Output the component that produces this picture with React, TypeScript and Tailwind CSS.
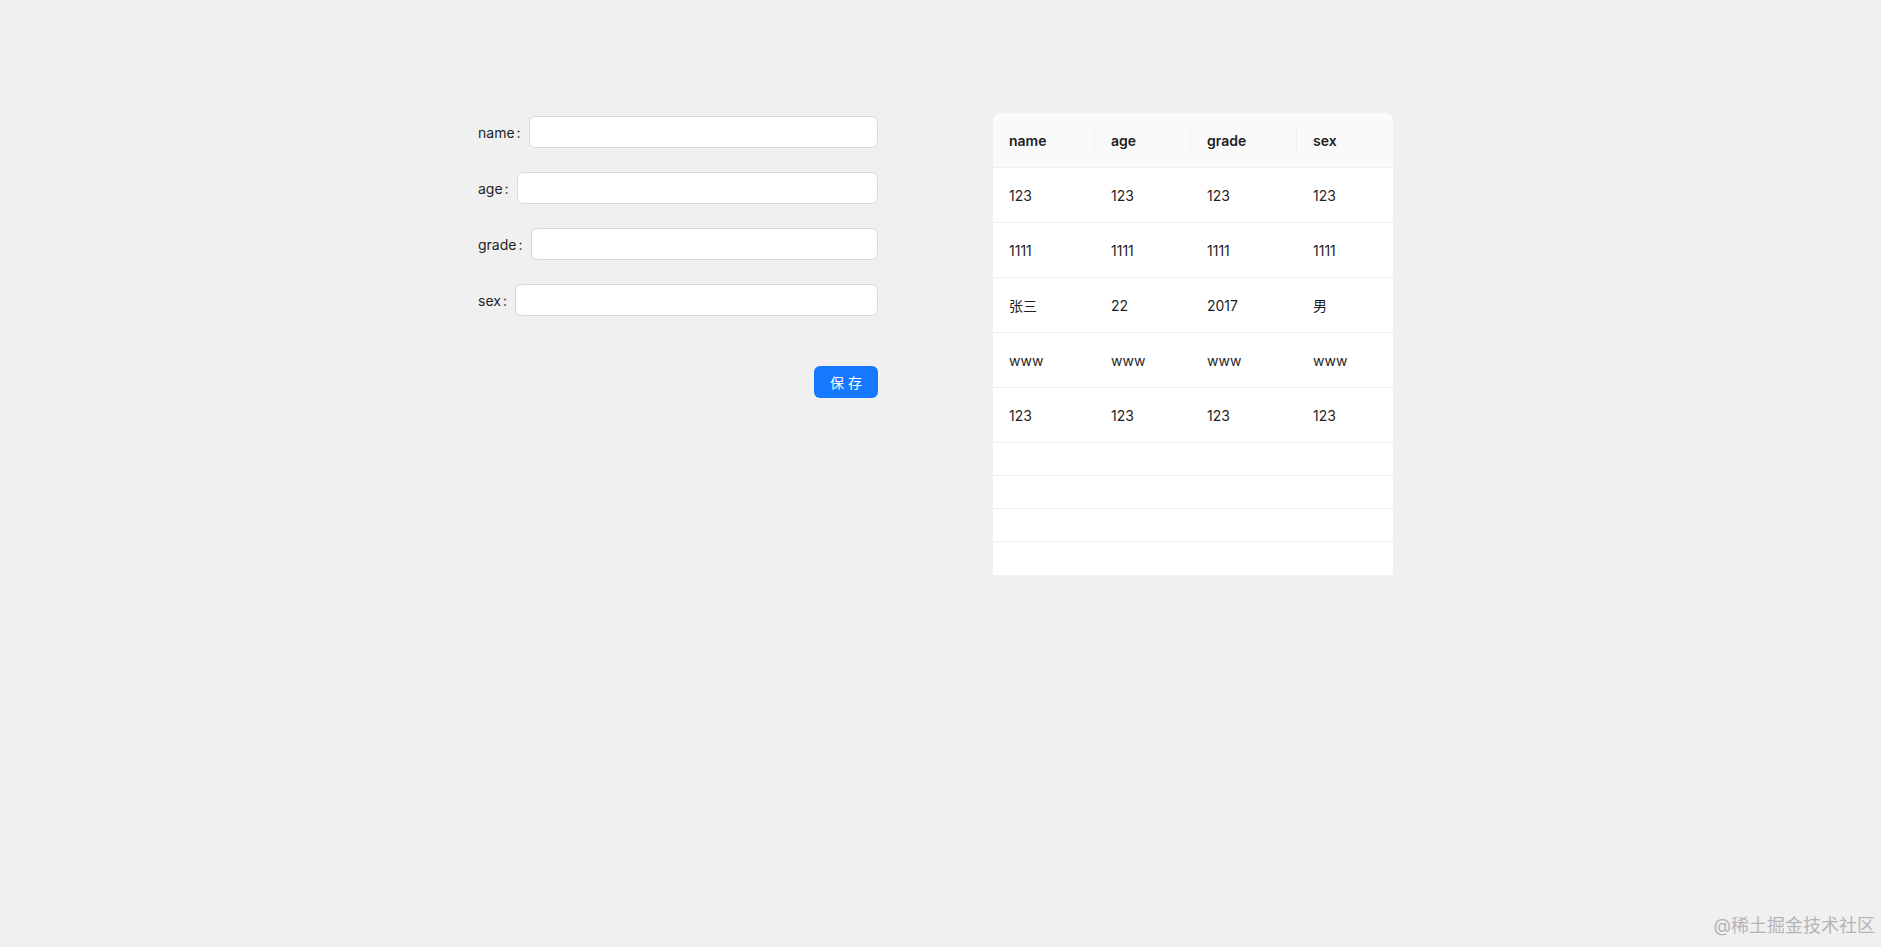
import React from "react";

const fields = ["name", "age", "grade", "sex"];

const rows = [
  ["123", "123", "123", "123"],
  ["1111", "1111", "1111", "1111"],
  ["张三", "22", "2017", "男"],
  ["www", "www", "www", "www"],
  ["123", "123", "123", "123"],
];

const colWidths = ["w-[102px]", "w-[96px]", "w-[106px]", "w-[96px]"];

// form on the left, simple list table on the right
function StudentForm() {
  return (
    <div className="mt-[3px] flex w-[400px] flex-col">
      {fields.map((f) => (
        <div key={f} className="mb-6 flex h-8 items-center">
          <label className="flex items-center whitespace-nowrap text-[14px] text-[#1f1f1f]">
            {f}
            <span className="ml-[2px] mr-2">:</span>
          </label>
          <input className="h-8 flex-1 rounded-md border border-[#d9d9d9] bg-white px-[11px] text-[14px] outline-none" />
        </div>
      ))}
      <div className="mt-[26px] flex justify-end">
        <button className="h-8 w-16 rounded-md bg-[#1677ff] text-[14px] text-white">
          保 存
        </button>
      </div>
    </div>
  );
}

function StudentTable() {
  return (
    <div className="w-[400px] overflow-hidden rounded-t-lg bg-white">
      <div className="flex h-[55px] items-center border-b border-[#f0f0f0] bg-[#fafafa]">
        {fields.map((f, i) => (
          <div
            key={f}
            className={`relative flex h-full items-center px-4 text-[14px] font-semibold text-[#1f1f1f] ${colWidths[i]}`}
          >
            {f}
            {i < fields.length - 1 && (
              <span className="absolute right-0 top-1/2 h-[22px] w-px -translate-y-1/2 bg-[#f0f0f0]" />
            )}
          </div>
        ))}
      </div>
      {rows.map((r, ri) => (
        <div key={ri} className="flex h-[55px] items-center border-b border-[#f0f0f0]">
          {r.map((c, ci) => (
            <div key={ci} className={`px-4 text-[14px] text-[#1f1f1f] ${colWidths[ci]}`}>
              {c}
            </div>
          ))}
        </div>
      ))}
      {[0, 1, 2].map((i) => (
        <div key={i} className="h-[33px] border-b border-[#f0f0f0]" />
      ))}
      <div className="h-[33px]" />
    </div>
  );
}

export default function App() {
  return (
    <div
      className="relative h-[947px] w-full bg-[#f0f0f0]"
      style={{ fontFamily: 'Inter, "Noto Sans CJK SC", sans-serif' }}
    >
      <div className="flex items-start gap-[115px] pl-[478px] pt-[113px]">
        <StudentForm />
        <StudentTable />
      </div>
      <div className="absolute bottom-[8px] right-[6px] text-[18px] text-[#b4b4b4]">
        @稀土掘金技术社区
      </div>
    </div>
  );
}
